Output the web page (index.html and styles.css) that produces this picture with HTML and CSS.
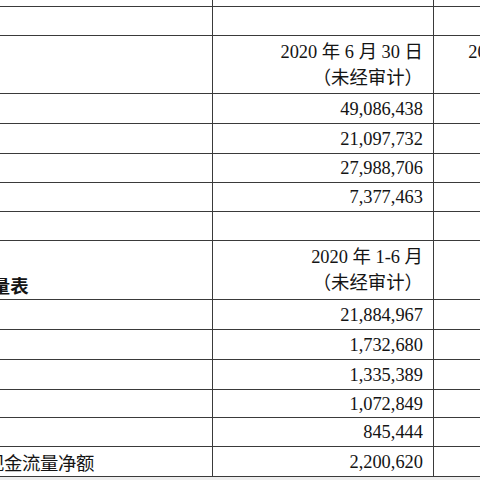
FILE: index.html
```html
<!DOCTYPE html>
<html lang="zh-CN">
<head>
<meta charset="utf-8">
<title>主要财务数据</title>
<link rel="stylesheet" href="styles.css">
</head>
<body>
<table class="fin">
  <colgroup>
    <col class="c-label">
    <col class="c-cur">
    <col class="c-prev">
  </colgroup>
  <tbody>
    <tr class="r-prev"><td class="label"></td><td></td><td></td></tr>
    <tr class="r-29"><td class="label">单位：万元</td><td></td><td></td></tr>
    <tr class="r-58">
      <td class="label">项目</td>
      <td class="num"><div>2020 年 6 月 30 日</div><div>（未经审计）</div></td>
      <td class="num"><div>2019 年 12 月 31 日</div><div>（经审计）</div></td>
    </tr>
    <tr class="r-30"><td class="label">资产总计</td><td class="num">49,086,438</td><td class="num">48,215,376</td></tr>
    <tr class="r-30"><td class="label">负债合计</td><td class="num">21,097,732</td><td class="num">20,734,518</td></tr>
    <tr class="r-29"><td class="label">所有者权益</td><td class="num">27,988,706</td><td class="num">27,480,858</td></tr>
    <tr class="r-29"><td class="label">归母权益</td><td class="num">7,377,463</td><td class="num">7,203,161</td></tr>
    <tr class="r-29"><td class="label"></td><td></td><td></td></tr>
    <tr class="r-58">
      <td class="label head">二、合并现金流量表</td>
      <td class="num"><div>2020 年 1-6 月</div><div>（未经审计）</div></td>
      <td class="num"><div>2019 年度</div><div>（经审计）</div></td>
    </tr>
    <tr class="r-30"><td class="label">营业收入</td><td class="num">21,884,967</td><td class="num">45,617,203</td></tr>
    <tr class="r-30"><td class="label">营业利润</td><td class="num">1,732,680</td><td class="num">3,812,447</td></tr>
    <tr class="r-30"><td class="label">利润总额</td><td class="num">1,335,389</td><td class="num">3,520,116</td></tr>
    <tr class="r-28"><td class="label">净利润</td><td class="num">1,072,849</td><td class="num">2,904,733</td></tr>
    <tr class="r-29"><td class="label">归母净利润</td><td class="num">845,444</td><td class="num">2,113,582</td></tr>
    <tr class="r-30"><td class="label tight">经营活动产生的现金流量净额</td><td class="num">2,200,620</td><td class="num">4,317,905</td></tr>
  </tbody>
</table>
</body>
</html>
```

FILE: styles.css
```css
html, body {
  margin: 0;
  padding: 0;
  background: #ededed;
  overflow: hidden;
}

.fin {
  border-collapse: collapse;
  table-layout: fixed;
  width: 774px;
  margin-left: -144px;
  margin-top: -25px;
  background: #ffffff;
  color: #141414;
  font-family: "Liberation Serif", "Noto Sans CJK SC", serif;
  font-size: 18.4px;
}

.c-label { width: 356px; }
.c-cur { width: 221px; }
.c-prev { width: 197px; }

.fin td {
  border: 1px solid #3a3a3a;
  padding: 0 10px 0 6px;
  vertical-align: middle;
  line-height: 26px;
  white-space: nowrap;
  overflow: hidden;
}

.fin td.label {
  font-family: "Noto Sans CJK SC", sans-serif;
  text-align: left;
}

.fin td.tight {
  text-indent: -3px;
  letter-spacing: -0.4px;
}

.fin td.head {
  font-weight: bold;
  vertical-align: bottom;
  padding-bottom: 1px;
}

.fin td.num {
  text-align: right;
}

.r-prev td { height: 30px; }
.r-28 td { height: 27px; }
.r-29 td { height: 28px; }
.r-30 td { height: 29px; }
.r-58 td { height: 57px; }
```
